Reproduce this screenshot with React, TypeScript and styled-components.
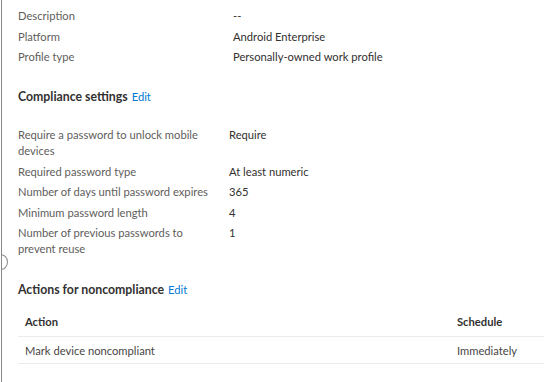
import React from "react";
import styled, { createGlobalStyle } from "styled-components";

const Global = createGlobalStyle`
  html, body { margin: 0; padding: 0; background: #ffffff; }
  body { font-family: "Segoe UI", Lato, sans-serif; }
`;

const Panel = styled.div`
  position: relative;
  width: 544px;
  height: 382px;
  box-sizing: border-box;
  margin-left: 1px;
  border-left: 1px solid #8a8886;
  padding: 8px 0 0 16px;
  overflow: hidden;
  color: #323130;
  font-size: 11.2px;
`;

const Handle = styled.div`
  position: absolute;
  left: -9px;
  top: 254px;
  width: 13px;
  height: 14px;
  border: 1px solid #8a8886;
  border-radius: 50%;
  background: #ffffff;
`;

const PropGrid = styled.div<{ $labelWidth: number }>`
  display: grid;
  grid-template-columns: ${(p) => p.$labelWidth}px 1fr;
  row-gap: 4.5px;
  line-height: 16px;
`;

const Label = styled.div`
  color: #605e5c;
  padding-right: 12px;
`;

const Value = styled.div`
  color: #323130;
`;

const Heading = styled.h2<{ $top: number; $bottom: number }>`
  margin: ${(p) => p.$top}px 0 ${(p) => p.$bottom}px;
  font-size: 12.3px;
  font-weight: 700;
  line-height: 20px;
  color: #323130;
`;

const EditLink = styled.a`
  margin-left: 4px;
  color: #0078d4;
  font-weight: 400;
  font-size: 11.2px;
  text-decoration: none;
`;

const Table = styled.div`
  display: flex;
  flex-direction: column;
  margin-right: -40px;
`;

const TableRow = styled.div<{ $header?: boolean }>`
  display: grid;
  grid-template-columns: 432px 1fr;
  height: ${(p) => (p.$header ? 30 : 26)}px;
  align-items: center;
  padding-left: 7px;
  border-bottom: 1px solid #edebe9;
  font-weight: ${(p) => (p.$header ? 700 : 400)};
  color: ${(p) => (p.$header ? "#323130" : "#484644")};
`;

const basics = [
  ["Description", "--"],
  ["Platform", "Android Enterprise"],
  ["Profile type", "Personally-owned work profile"],
];

const compliance = [
  ["Require a password to unlock mobile devices", "Require"],
  ["Required password type", "At least numeric"],
  ["Number of days until password expires", "365"],
  ["Minimum password length", "4"],
  ["Number of previous passwords to prevent reuse", "1"],
];

export default function App() {
  return (
    <>
      <Global />
      <Panel>
        <Handle />
        <PropGrid $labelWidth={215}>
          {basics.map(([l, v]) => (
            <React.Fragment key={l}>
              <Label>{l}</Label>
              <Value>{v}</Value>
            </React.Fragment>
          ))}
        </PropGrid>
        <Heading $top={22} $bottom={20}>
          Compliance settings<EditLink href="#">Edit</EditLink>
        </Heading>
        <PropGrid $labelWidth={211}>
          {compliance.map(([l, v]) => (
            <React.Fragment key={l}>
              <Label>{l}</Label>
              <Value>{v}</Value>
            </React.Fragment>
          ))}
        </PropGrid>
        <Heading $top={23} $bottom={6}>
          Actions for noncompliance<EditLink href="#">Edit</EditLink>
        </Heading>
        <Table>
          <TableRow $header>
            <span>Action</span>
            <span>Schedule</span>
          </TableRow>
          <TableRow>
            <span>Mark device noncompliant</span>
            <span>Immediately</span>
          </TableRow>
        </Table>
      </Panel>
    </>
  );
}
